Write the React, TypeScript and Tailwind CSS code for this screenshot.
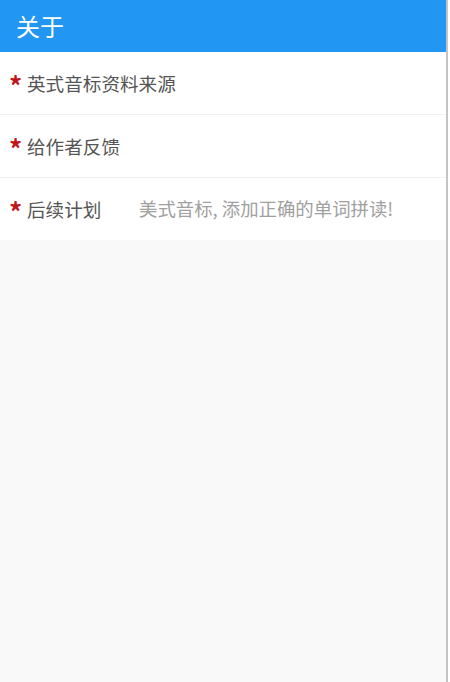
export default function App() {
  const rows = [
    { label: '英式音标资料来源', value: '' },
    { label: '给作者反馈', value: '' },
    { label: '后续计划', value: '美式音标, 添加正确的单词拼读!' },
  ];

  return (
    <div
      className="w-[450px] h-[682px] bg-white"
      style={{ fontFamily: '"Noto Sans CJK SC", "Noto Sans", sans-serif' }}
    >
      <div className="w-[448px] h-full bg-[#f9f9f9] border-r-2 border-[#c4c4c4] flex flex-col">
        {/* 顶部标题栏 */}
        <header className="h-[52px] bg-[#2196f3] flex items-center px-4 shrink-0">
          <h1 className="text-[24px] text-white leading-none">关于</h1>
        </header>

        {/* 列表 */}
        <ul className="bg-white">
          {rows.map((row, i) => (
            <li
              key={row.label}
              className={`flex items-center pl-[9px] whitespace-nowrap ${
                i < rows.length - 1 ? 'h-[63px] border-b border-[#f1f1f1]' : 'h-[62px]'
              }`}
            >
              <span className="text-[#c0151b] text-[26px] font-bold leading-none mt-[4px] w-[18px]">*</span>
              <span className="text-[18.6px] text-[#555555] w-[112px]">{row.label}</span>
              {row.value && <span className="text-[18.4px] text-[#a0a0a0]">{row.value}</span>}
            </li>
          ))}
        </ul>
      </div>
    </div>
  );
}
